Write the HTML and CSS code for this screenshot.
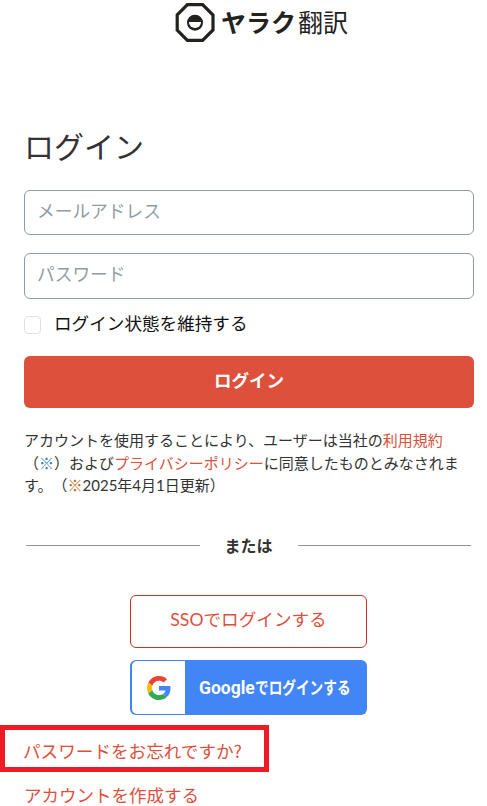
FILE: index.html
```html
<!DOCTYPE html>
<html lang="ja">
<head>
<meta charset="utf-8">
<title>ヤラク翻訳</title>
<link rel="stylesheet" href="styles.css">
</head>
<body>
<header class="brand">
  <svg class="brand-mark" viewBox="0 0 40 40" width="40" height="40">
    <path d="M12.4 2.6H27.6L38 13V28L27.6 38.4H12.4L2.2 28V13Z" fill="none" stroke="#22221f" stroke-width="3.2"/>
    <circle cx="20" cy="20.7" r="8" fill="#22221f"/>
    <path d="M13.9 20.1H26.1A6.1 5.9 0 0 1 13.9 20.1Z" fill="#fff"/>
  </svg>
  <div class="brand-name"><b>ヤラク</b><span>翻訳</span></div>
</header>
<main class="login">
  <h1>ログイン</h1>
  <form>
    <input class="field email" type="text" placeholder="メールアドレス">
    <input class="field password" type="password" placeholder="パスワード">
    <label class="remember"><input type="checkbox"><span>ログイン状態を維持する</span></label>
    <button class="submit" type="button">ログイン</button>
  </form>
  <p class="terms">アカウントを使用することにより、ユーザーは当社の<a>利用規約</a><br>（<a class="note-blue">※</a>）および<a>プライバシーポリシー</a>に同意したものとみなされま<br>す。（<span class="note-orange">※</span><span class="date">2025年4月1日更新</span>）</p>
  <div class="divider"><span>または</span></div>
  <div class="providers">
    <button class="sso" type="button">SSOでログインする</button>
    <button class="google" type="button">
      <span class="google-mark"><svg viewBox="0 0 48 48" width="24" height="24">
        <path fill="#ea4335" d="M24 9.5c3.54 0 6.71 1.22 9.21 3.6l6.85-6.85C35.9 2.38 30.47 0 24 0 14.62 0 6.51 5.38 2.56 13.22l7.98 6.19C12.43 13.72 17.74 9.5 24 9.5z"/>
        <path fill="#4285f4" d="M46.98 24.55c0-1.57-.15-3.09-.38-4.55H24v9.02h12.94c-.58 2.96-2.26 5.48-4.78 7.18l7.73 6c4.51-4.18 7.09-10.36 7.09-17.65z"/>
        <path fill="#fbbc05" d="M10.53 28.59A14.5 14.5 0 0 1 9.77 24c0-1.6.27-3.14.76-4.59l-7.98-6.19A23.9 23.9 0 0 0 0 24c0 3.87.92 7.53 2.56 10.78z"/>
        <path fill="#34a853" d="M24 48c6.48 0 11.93-2.13 15.89-5.81l-7.73-6c-2.15 1.45-4.92 2.3-8.16 2.3-6.26 0-11.57-4.22-13.47-9.91l-7.98 6.19C6.51 42.62 14.62 48 24 48z"/>
      </svg></span>
      <span class="google-label"><span>Google</span><span class="narrow">でログインする</span></span>
    </button>
  </div>
  <nav class="links">
    <a class="forgot">パスワードをお忘れですか?</a>
    <a class="create">アカウントを作成する</a>
  </nav>
</main>
</body>
</html>
```
FILE: styles.css
```css
* { box-sizing: border-box; }
body {
  margin: 0;
  height: 806px;
  overflow: hidden;
  background: #fff;
  color: #333;
  font-family: "Noto Sans CJK JP", sans-serif;
  font-size: 17.5px;
  text-spacing-trim: space-all;
}
button, input { font: inherit; margin: 0; }
a { color: #dd503c; }
.brand {
  display: flex;
  height: 124px;
  padding: 2px 0 0 175px;
}
.brand-mark { flex: none; }
.brand-name {
  display: flex;
  gap: 2px;
  margin-left: 6px;
  height: 40px;
  line-height: 39px;
  font-size: 25px;
  color: #22221f;
  white-space: nowrap;
}
.login { padding: 0 13px 0 24px; }
h1 {
  margin: 0;
  height: 66px;
  line-height: 42px;
  font-size: 30px;
  font-weight: 400;
}
form { display: flex; flex-direction: column; }
.field {
  width: 450px;
  padding: 0 12px 5px;
  border: 1px solid #8c9bab;
  border-radius: 6px;
  outline: none;
  background: #fff;
  font-size: 17.7px;
}
.field::placeholder { color: #929ba4; opacity: 1; }
.email { height: 45px; }
.password { height: 46px; margin-top: 18px; padding-bottom: 6px; }
.remember {
  display: flex;
  height: 50px;
  margin-top: 7px;
  gap: 13px;
  line-height: 34px;
  font-size: 17.6px;
  color: #111;
}
.remember input {
  appearance: none;
  width: 17px;
  height: 18px;
  margin-top: 10px;
  border: 1px solid #dee0e4;
  border-radius: 4px;
}
.submit {
  width: 450px;
  height: 52px;
  padding: 0 0 6px;
  border: 0;
  border-radius: 6px;
  background: #dd503c;
  color: #fff;
  font-weight: 700;
}
.terms {
  margin: 21px 0 0;
  height: 117px;
  font-size: 15px;
  line-height: 22.6px;
  white-space: nowrap;
}
.note-blue { color: #397cac; }
.note-orange { color: #b66a18; }
.date { font-family: Lato, "Noto Sans CJK JP", sans-serif; }
.divider {
  display: flex;
  align-items: center;
  gap: 25px;
  height: 24px;
  margin-top: -13px;
  padding: 0 3px 0 2px;
  font-size: 16px;
  font-weight: 700;
}
.divider::before, .divider::after {
  content: "";
  flex: 1;
  height: 1px;
  background: #909395;
}
.providers {
  display: flex;
  flex-direction: column;
  gap: 12px;
  width: 237px;
  margin: 38px 0 0 106px;
}
.sso {
  height: 53px;
  padding: 0 0 6px;
  border: 1px solid #c93224;
  border-radius: 6px;
  background: #fff;
  color: #dd503c;
  font-family: Lato, "Noto Sans CJK JP", sans-serif;
  font-size: 17.6px;
}
.google {
  display: flex;
  align-items: center;
  height: 55px;
  padding: 1px 2px;
  border: 0;
  border-radius: 6px;
  background: #4285f4;
  color: #fff;
}
.google-mark {
  display: flex;
  align-items: center;
  justify-content: center;
  flex: none;
  width: 53px;
  height: 53px;
  border-radius: 5px 0 0 5px;
  background: #fff;
}
.google-label {
  display: flex;
  align-items: baseline;
  width: 165px;
  margin-left: 14px;
  padding-bottom: 2px;
  font-family: Roboto, "Noto Sans CJK JP", sans-serif;
  font-size: 17.5px;
  font-weight: 700;
  white-space: nowrap;
}
.narrow { transform: scaleX(0.78); transform-origin: left; }
.links {
  display: flex;
  flex-direction: column;
  margin: 10px 0 0 -24px;
}
.forgot {
  width: 269px;
  height: 47px;
  padding-left: 18px;
  border: 5px solid #ed1c24;
  line-height: 41px;
  font-size: 17.6px;
  white-space: nowrap;
}
.create {
  margin-left: 24px;
  line-height: 46px;
}
```
